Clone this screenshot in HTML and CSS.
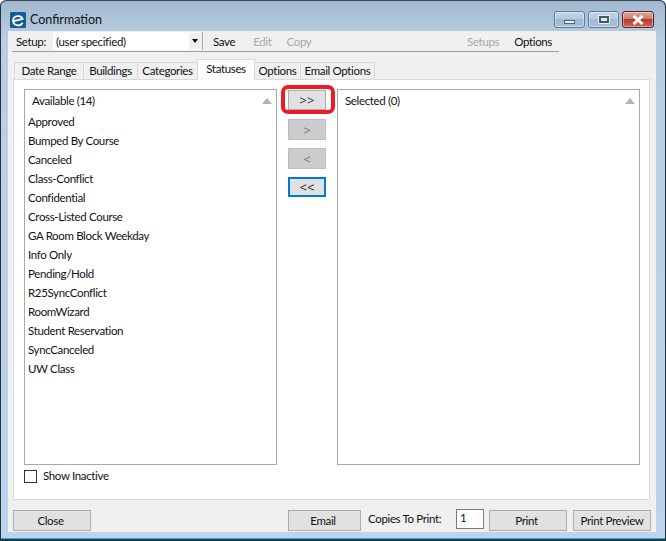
FILE: index.html
```html
<!DOCTYPE html>
<html lang="en">
<head>
<meta charset="utf-8">
<title>Confirmation</title>
<link rel="stylesheet" href="styles.css">
</head>
<body>
<div class="window">
  <header class="titlebar">
    <svg class="app-icon" width="16" height="16" viewBox="0 0 16 16"><rect width="16" height="16" rx="1.5" fill="#0f5f96"/><path d="M4 9.2 L12.6 6.8 A4.9 4.3 0 0 0 3.2 8 A5 4.6 0 0 0 12.6 10.8" fill="none" stroke="#fff" stroke-width="1.8"/></svg>
    <span class="title">Confirmation</span>
    <div class="caption-buttons">
      <div class="cap cap-min"><span class="min-glyph"></span></div>
      <div class="cap cap-max"><span class="max-glyph"></span></div>
      <div class="cap cap-close"><svg width="14" height="10" viewBox="0 0 14 10"><path d="M2.5 1 L11.5 9 M11.5 1 L2.5 9" stroke="#fff" stroke-width="3"/></svg></div>
    </div>
  </header>
  <div class="client">
    <div class="toolbar">
      <span class="setup-label">Setup:</span>
      <div class="combo"><span>(user specified)</span><span class="combo-arrow"><i></i></span></div>
      <div class="sep"></div>
      <span class="tool tool-save">Save</span>
      <span class="tool tool-edit muted">Edit</span>
      <span class="tool tool-copy muted">Copy</span>
      <span class="tool tool-setups muted">Setups</span>
      <span class="tool tool-options">Options</span>
    </div>
    <div class="tabs">
      <span class="tab tab-date">Date Range</span>
      <span class="tab tab-bld">Buildings</span>
      <span class="tab tab-cat">Categories</span>
      <span class="tab tab-active">Statuses</span>
      <span class="tab tab-opt">Options</span>
      <span class="tab tab-email">Email Options</span>
    </div>
    <main class="panel">
      <div class="pickers">
        <section class="list list-left">
          <div class="list-head"><span>Available (14)</span><i class="up"></i></div>
          <ul class="items">
            <li>Approved</li>
            <li>Bumped By Course</li>
            <li>Canceled</li>
            <li>Class-Conflict</li>
            <li>Confidential</li>
            <li>Cross-Listed Course</li>
            <li>GA Room Block Weekday</li>
            <li>Info Only</li>
            <li>Pending/Hold</li>
            <li>R25SyncConflict</li>
            <li>RoomWizard</li>
            <li>Student Reservation</li>
            <li>SyncCanceled</li>
            <li>UW Class</li>
          </ul>
        </section>
        <div class="movers">
          <div class="mover">&gt;&gt;<span class="highlight"></span></div>
          <div class="mover disabled">&gt;</div>
          <div class="mover disabled">&lt;</div>
          <div class="mover focused">&lt;&lt;</div>
        </div>
        <section class="list list-right">
          <div class="list-head"><span>Selected (0)</span><i class="up"></i></div>
        </section>
      </div>
      <label class="inactive"><span class="check"></span><span class="inactive-text">Show Inactive</span></label>
    </main>
    <footer class="footer">
      <div class="btn btn-close">Close</div>
      <div class="btn btn-email">Email</div>
      <span class="copies">Copies To Print:</span>
      <div class="copies-input">1</div>
      <div class="btn btn-print">Print</div>
      <div class="btn btn-preview">Print Preview</div>
    </footer>
  </div>
</div>
</body>
</html>
```

FILE: styles.css
```css
* { box-sizing: border-box; }
html, body { margin: 0; padding: 0; }
body {
  width: 666px;
  height: 541px;
  overflow: hidden;
  background: #fff;
  font-family: "Lato", "Open Sans", sans-serif;
  font-size: 11.5px;
  letter-spacing: -0.35px;
  color: #111;
}
.window {
  width: 666px;
  height: 541px;
  display: flex;
  flex-direction: column;
  padding: 0 10px 7px 8px;
  background: linear-gradient(#a3b9cf 0, #b9cee3 40px, #bcd5ec 100%);
  border: 1px solid #27333c;
  border-top-color: #3b4650;
  border-bottom: 2px solid #1f3b4a;
  border-left-width: 0;
  border-right-width: 0;
  border-radius: 6px 6px 0 0;
  box-shadow: inset 1px 0 0 #27333c, inset -1px 0 0 #27333c, inset 0 -1px 0 #1fb7e0;
}
.titlebar {
  height: 30px;
  flex: none;
  display: flex;
  align-items: center;
  margin-left: 2px;
  padding-top: 7px;
  position: relative;
}
.app-icon { flex: none; margin-right: 4px; }
.title { font-size: 12.5px; letter-spacing: 0; color: #111; }
.caption-buttons {
  position: absolute;
  top: 10px;
  right: 2px;
  display: flex;
  gap: 3px;
}
.cap {
  width: 31px;
  height: 17px;
  border: 1px solid #5f7a96;
  border-radius: 3px;
  background: linear-gradient(#c4d5e6 0, #b5cbe0 45%, #9db8d2 50%, #a8c2da 100%);
  box-shadow: inset 0 0 0 1px rgba(255,255,255,.4);
  display: flex;
  align-items: center;
  justify-content: center;
}
.min-glyph { width: 11px; height: 4px; margin-top: 5px; background: #eef3f8; border: 1px solid #51657a; }
.max-glyph { width: 10px; height: 7px; border: 2px solid #44586c; background: #dfe8f1; box-shadow: 0 0 0 1px #e7eef5; }
.cap-close {
  width: 32px;
  border-color: #5d1f28;
  background: linear-gradient(#dca79d 0, #cf7f72 45%, #b83a2a 50%, #c96a58 100%);
}
.client {
  flex: 1;
  display: flex;
  flex-direction: column;
  background: #f0f0f0;
}
.toolbar {
  height: 21px;
  flex: none;
  margin: 0 97px 0 4px;
  display: flex;
  align-items: center;
  border-bottom: 1px solid #a0a0a0;
  padding: 0 0 0 4px;
}
.setup-label { width: 37px; flex: none; }
.combo {
  width: 147px;
  height: 18px;
  flex: none;
  background: #fff;
  display: flex;
  align-items: center;
  justify-content: space-between;
  padding-left: 3px;
}
.combo-arrow { width: 11px; height: 16px; background: #f0f0f0; display: flex; align-items: center; justify-content: center; }
.combo-arrow i { border: 3.5px solid transparent; border-top: 4px solid #111; border-bottom: 0; }
.sep { width: 1px; height: 18px; background: #a8a8a8; margin-left: 2px; }
.tool-save { margin-left: 10px; }
.tool-edit { margin-left: 18px; }
.tool-copy { margin-left: 15px; }
.tool-setups { margin-left: auto; }
.tool-options { margin-left: 15px; margin-right: 7px; color: #111; }
.muted { color: #a9a9a9; }
.tabs {
  height: 27px;
  flex: none;
  display: flex;
  align-items: flex-end;
  padding-left: 6px;
  position: relative;
  z-index: 1;
}
.tab {
  height: 17px;
  padding: 0 0 1px;
  display: flex;
  align-items: center;
  justify-content: center;
  white-space: nowrap;
  background: #f0f0f0;
  border: 1px solid #d9d9d9;
  border-bottom: 0;
  margin-right: -1px;
}
.tab-date { width: 70px; }
.tab-bld { width: 55px; }
.tab-cat { width: 61px; }
.tab-active {
  width: 58px;
  height: 21px;
  background: #fff;
  margin-bottom: -1px;
  padding-bottom: 3px;
}
.tab-opt { width: 47px; }
.tab-email { width: 75px; }
.panel {
  flex: 1;
  margin: 0 6px 0 5px;
  background: #fff;
  border: 1px solid #d9d9d9;
  padding: 9px 9px 0 10px;
  display: flex;
  flex-direction: column;
}
.pickers { display: flex; height: 376px; flex: none; }
.list { border: 1px solid #a8a8a8; background: #fff; }
.list-left { width: 253px; }
.list-right { width: 303px; }
.list-head {
  height: 20px;
  display: flex;
  align-items: center;
  justify-content: space-between;
  padding: 1px 4px 0 7px;
}
.up { border: 5px solid transparent; border-top: 0; border-bottom: 6px solid #b3b3b3; }
.items { list-style: none; margin: 0; padding: 2px 0 0 3px; }
.items li { height: 19px; line-height: 19px; white-space: nowrap; }
.movers {
  width: 60px;
  flex: none;
  display: flex;
  flex-direction: column;
  align-items: center;
  padding-top: 1px;
}
.mover {
  width: 38px;
  height: 20px;
  margin-bottom: 9px;
  background: #e1e1e1;
  border: 1px solid #adadad;
  display: flex;
  align-items: center;
  justify-content: center;
  position: relative;
  font-family: "Open Sans", sans-serif;
  font-size: 13px;
  letter-spacing: 0;
  color: #333;
}
.disabled { background: #cccccc; border-color: #bfbfbf; color: #777; height: 21px; margin-bottom: 8px; }
.focused { border: 2px solid #0078d7; color: #222; }
.highlight {
  position: absolute;
  left: -8px;
  top: -6px;
  width: 54px;
  height: 29px;
  border: 4px solid #ed1c24;
  border-radius: 7px;
}
.inactive { display: flex; align-items: center; margin-top: 5px; height: 13px; }
.inactive-text { padding-bottom: 2px; }
.check { width: 13px; height: 13px; border: 1px solid #333; background: #fff; margin-right: 6px; }
.footer {
  height: 32px;
  flex: none;
  display: flex;
  align-items: flex-end;
  padding: 0 5px 1px 5px;
}
.btn {
  height: 21px;
  background: #e1e1e1;
  border: 1px solid #adadad;
  display: flex;
  align-items: center;
  justify-content: center;
  padding-right: 3px;
}
.btn-close { width: 78px; }
.btn-email { width: 73px; margin-left: auto; }
.copies { margin: 0 0 4px 7px; width: 88px; line-height: 16px; }
.copies-input {
  width: 28px;
  height: 20px;
  margin: 0 5px 2px 0;
  background: #fff;
  border: 1px solid #7a7a7a;
  padding-left: 3px;
  line-height: 15px;
}
.btn-print { width: 78px; }
.btn-preview { width: 78px; margin-left: 6px; padding-right: 0; }
```
